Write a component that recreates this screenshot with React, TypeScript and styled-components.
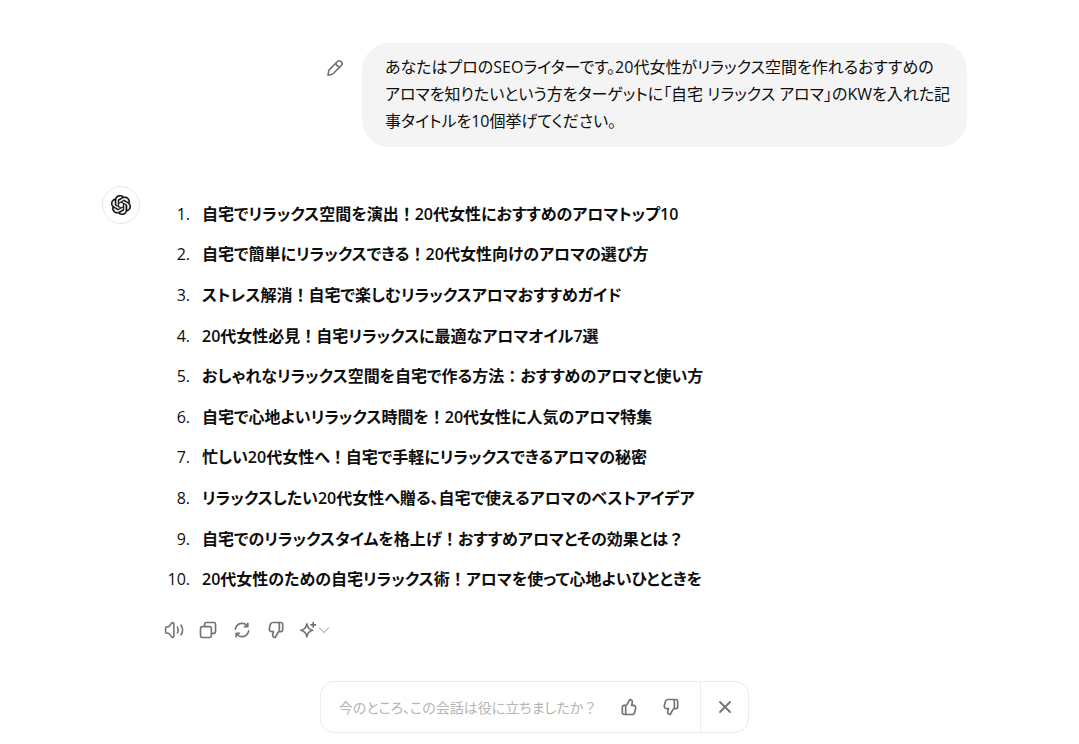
import React from "react";
import styled, { createGlobalStyle } from "styled-components";
import { SiOpenai } from "react-icons/si";

const GlobalStyle = createGlobalStyle`
  *, *::before, *::after { box-sizing: border-box; }
  body {
    margin: 0;
    background: #ffffff;
    color: #0d0d0d;
    font-family: "Open Sans", "Noto Sans CJK JP", sans-serif;
    font-feature-settings: "palt";
    font-size: 16px;
    line-height: 27px;
  }
`;

const Page = styled.main`
  padding: 43px 10px 11px 0;
`;

const Thread = styled.div`
  max-width: 865px;
  margin: 0 auto;
`;

const UserTurn = styled.section`
  display: flex;
  justify-content: flex-end;
  align-items: flex-start;
  gap: 17px;
`;

const Bubble = styled.p`
  margin: 0;
  max-width: 605px;
  flex: 1;
  padding: 11px 16px 12px 23px;
  border-radius: 27px;
  background: #f4f4f4;
`;

const IconButton = styled.button`
  display: inline-flex;
  align-items: center;
  justify-content: center;
  height: 20px;
  min-width: 20px;
  padding: 0;
  border: 0;
  background: transparent;
  color: #737373;
  cursor: pointer;
`;

const EditButton = styled(IconButton)`
  margin-top: 15px;
`;

const AssistantTurn = styled.section`
  display: flex;
  gap: 24px;
  margin-top: 39px;
`;

const Avatar = styled.div`
  display: flex;
  align-items: center;
  justify-content: center;
  flex: none;
  width: 38px;
  height: 38px;
  border: 1px solid #e8e8e8;
  border-radius: 50%;

  svg {
    stroke: currentColor;
    stroke-width: 0.4;
  }
`;

const Reply = styled.div`
  flex: 1;
  padding-top: 8px;
`;

const TitleList = styled.ol`
  display: grid;
  grid-auto-rows: 1fr;
  align-items: center;
  min-height: 406px;
  margin: 0;
  padding: 0 0 0 38px;
  list-style: none;
  counter-reset: title;
`;

const TitleItem = styled.li`
  position: relative;
  counter-increment: title;
  font-weight: 600;

  &::before {
    content: counter(title) ".";
    position: absolute;
    right: 100%;
    margin-right: 12px;
    font-weight: 400;
  }
`;

const FullWidth = styled.span`
  font-feature-settings: normal;
`;

const Actions = styled.div`
  display: flex;
  gap: 14px;
  margin-top: 20px;
`;

const Feedback = styled.aside`
  display: flex;
  width: fit-content;
  margin: 41px auto 0;
  height: 52px;
  border: 1px solid #ececec;
  border-radius: 14px;
`;

const FeedbackBody = styled.div`
  display: flex;
  align-items: center;
  gap: 22px;
  padding: 0 19px 0 18px;
`;

const Question = styled.span`
  font-size: 14px;
  color: #b4b4b4;
  white-space: nowrap;
`;

const DismissArea = styled.div`
  display: flex;
  align-items: center;
  justify-content: center;
  width: 48px;
  border-left: 1px solid #ececec;
`;

type IconProps = { children: React.ReactNode; width?: number; stroke?: number };

const SolidIcon = ({ children }: IconProps) => (
  <svg width="20" height="20" viewBox="0 0 24 24" fill="currentColor" fillRule="evenodd" aria-hidden="true">
    {children}
  </svg>
);

const LineIcon = ({ width = 20, stroke = 1.6, children }: IconProps) => (
  <svg
    width={width}
    height="20"
    viewBox={`0 0 ${width} 20`}
    fill="none"
    stroke="currentColor"
    strokeWidth={stroke}
    strokeLinecap="round"
    strokeLinejoin="round"
    aria-hidden="true"
  >
    {children}
  </svg>
);

const PencilIcon = () => (
  <LineIcon>
    <path d="M3 17.2l.7-4.3c.1-.5.3-.9.7-1.3l7.9-7.9a2.7 2.7 0 0 1 3.9 3.9l-7.9 7.9c-.4.4-.8.6-1.3.7z" />
    <path d="M10.8 5.2c.5 2 1.8 3.3 3.9 3.9" />
  </LineIcon>
);

const SpeakerIcon = () => (
  <LineIcon>
    <path d="M1.6 8.2c0-.8.6-1.4 1.4-1.4h1.2c.4 0 .7-.2.9-.5l2.6-3.2c.8-.9 2.2-.4 2.2.8v12.2c0 1.2-1.4 1.7-2.2.8l-2.6-3.2c-.2-.3-.5-.5-.9-.5H3c-.8 0-1.4-.6-1.4-1.4z" />
    <path d="M13.4 7c1 1.9 1 4.1 0 6M17 5.2c2 3 2 6.6 0 9.6" />
  </LineIcon>
);

const CopyIcon = () => (
  <SolidIcon>
    <path d="M7 5C7 3.343 8.343 2 10 2H19C20.657 2 22 3.343 22 5V14C22 15.657 20.657 17 19 17H17V19C17 20.657 15.657 22 14 22H5C3.343 22 2 20.657 2 19V10C2 8.343 3.343 7 5 7H7V5ZM9 7H14C15.657 7 17 8.343 17 10V15H19C19.552 15 20 14.552 20 14V5C20 4.448 19.552 4 19 4H10C9.448 4 9 4.448 9 5V7ZM5 9C4.448 9 4 9.448 4 10V19C4 19.552 4.448 20 5 20H14C14.552 20 15 19.552 15 19V10C15 9.448 14.552 9 14 9H5Z" />
  </SolidIcon>
);

const refreshArm =
  "M3.07 10.876C3.623 6.436 7.41 3 12 3C14.282 3 16.403 3.851 18.012 5.254V4C18.012 3.448 18.46 3 19.012 3C19.564 3 20.012 3.448 20.012 4V8C20.012 8.552 19.564 9 19.012 9H15C14.448 9 14 8.552 14 8C14 7.448 14.448 7 15 7H16.957C15.676 5.764 13.91 5 12 5C8.431 5 5.485 7.672 5.054 11.124C4.986 11.672 4.486 12.061 3.938 11.992C3.39 11.924 3.001 11.424 3.07 10.876Z";

const RefreshIcon = () => (
  <SolidIcon>
    <path d={refreshArm} />
    <path d={refreshArm} transform="rotate(180 12 12)" />
  </SolidIcon>
);

const ThumbDownIcon = () => (
  <SolidIcon>
    <path d="M11.873 21.496C11.673 21.847 11.281 22.042 10.881 21.992L10.427 21.936C7.96 21.627 6.369 19.167 7.1 16.79L7.651 15H6.932C4.295 15 2.379 12.492 3.073 9.948L4.437 4.948C4.911 3.207 6.492 2 8.296 2H18.005C19.661 2 21.005 3.343 21.005 5V12C21.005 13.657 19.661 15 18.005 15H16.005C15.745 15 15.505 15.139 15.377 15.364L11.873 21.496ZM14.005 4H8.296C7.394 4 6.604 4.604 6.366 5.474L5.003 10.474C4.656 11.746 5.614 13 6.932 13H9.005C9.322 13 9.62 13.151 9.809 13.406C9.997 13.661 10.054 13.991 9.96 14.294L9.011 17.378C8.666 18.5 9.356 19.66 10.473 19.915L13.64 14.372C13.952 13.826 14.438 13.414 15.005 13.19V5C15.005 4.448 14.557 4 14.005 4ZM17.005 13V5C17.005 4.649 16.944 4.313 16.834 4H18.005C18.557 4 19.005 4.448 19.005 5V12C19.005 12.552 18.557 13 18.005 13H17.005Z" />
  </SolidIcon>
);

const ThumbUpIcon = () => (
  <SolidIcon>
    <path d="M12.132 2.504C12.332 2.153 12.724 1.958 13.124 2.008L13.578 2.064C16.045 2.373 17.636 4.834 16.905 7.21L16.354 9H17.072C19.71 9 21.625 11.508 20.931 14.053L19.568 19.053C19.093 20.793 17.512 22 15.709 22H6C4.343 22 3 20.657 3 19V12C3 10.343 4.343 9 6 9H8C8.26 9 8.499 8.861 8.628 8.636L12.132 2.504ZM10 20H15.709C16.611 20 17.401 19.396 17.638 18.526L19.002 13.526C19.349 12.254 18.391 11 17.072 11H15C14.683 11 14.384 10.849 14.196 10.594C14.007 10.339 13.951 10.009 14.044 9.706L14.993 6.622C15.338 5.5 14.648 4.34 13.532 4.085L10.364 9.628C10.052 10.174 9.567 10.586 9 10.81V19C9 19.552 9.448 20 10 20ZM7 11V19C7 19.351 7.06 19.687 7.171 20H6C5.448 20 5 19.552 5 19V12C5 11.448 5.448 11 6 11H7Z" />
  </SolidIcon>
);

const SparkleIcon = () => (
  <LineIcon width={18}>
    <path d="M6.8 3.8c.7 4 2.1 5.7 5.9 6.5-3.800.8-5.200 2.500-5.900 6.500-.7-4-2.100-5.700-5.900-6.500 3.800-.8 5.200-2.500 5.900-6.500z" />
    <path d="M13.2 2.6v4.6M10.9 4.9h4.6" />
  </LineIcon>
);

const ChevronIcon = () => (
  <svg width="12" height="12" viewBox="0 0 12 12" fill="none" stroke="#c4c4c4" strokeWidth="1.4" strokeLinecap="round" strokeLinejoin="round" aria-hidden="true">
    <path d="M1.5 4L6 8.5 10.5 4" />
  </svg>
);

const CloseIcon = () => (
  <LineIcon stroke={1.8}>
    <path d="M5 5l10 10M15 5L5 15" />
  </LineIcon>
);

/* Keeps ！ ： ？ at full em width while the kana around them stay proportional. */
const JapaneseText = ({ text }: { text: string }) => (
  <>
    {text.split(/([！：？])/).map((part, i) =>
      /^[！：？]$/.test(part) ? <FullWidth key={i}>{part}</FullWidth> : part
    )}
  </>
);

const titles = [
  "自宅でリラックス空間を演出！20代女性におすすめのアロマトップ10",
  "自宅で簡単にリラックスできる！20代女性向けのアロマの選び方",
  "ストレス解消！自宅で楽しむリラックスアロマおすすめガイド",
  "20代女性必見！自宅リラックスに最適なアロマオイル7選",
  "おしゃれなリラックス空間を自宅で作る方法：おすすめのアロマと使い方",
  "自宅で心地よいリラックス時間を！20代女性に人気のアロマ特集",
  "忙しい20代女性へ！自宅で手軽にリラックスできるアロマの秘密",
  "リラックスしたい20代女性へ贈る、自宅で使えるアロマのベストアイデア",
  "自宅でのリラックスタイムを格上げ！おすすめアロマとその効果とは？",
  "20代女性のための自宅リラックス術！アロマを使って心地よいひとときを",
];

export default function App() {
  return (
    <>
      <GlobalStyle />
      <Page lang="ja">
        <Thread>
          <UserTurn>
            <EditButton type="button" aria-label="編集"><PencilIcon /></EditButton>
            <Bubble>
              あなたはプロのSEOライターです。20代女性がリラックス空間を作れるおすすめの
              <br />
              アロマを知りたいという方をターゲットに「自宅 リラックス アロマ」のKWを入れた記
              <br />
              事タイトルを10個挙げてください。
            </Bubble>
          </UserTurn>

          <AssistantTurn>
            <Avatar><SiOpenai size={20} aria-hidden="true" /></Avatar>
            <Reply>
              <TitleList>
                {titles.map((title) => (
                  <TitleItem key={title}><JapaneseText text={title} /></TitleItem>
                ))}
              </TitleList>
              <Actions>
                <IconButton type="button" aria-label="読み上げる"><SpeakerIcon /></IconButton>
                <IconButton type="button" aria-label="コピー"><CopyIcon /></IconButton>
                <IconButton type="button" aria-label="再生成"><RefreshIcon /></IconButton>
                <IconButton type="button" aria-label="良くない回答"><ThumbDownIcon /></IconButton>
                <IconButton type="button" aria-label="モデルを変更"><SparkleIcon /><ChevronIcon /></IconButton>
              </Actions>
            </Reply>
          </AssistantTurn>
        </Thread>

        <Feedback>
          <FeedbackBody>
            <Question><JapaneseText text="今のところ、この会話は役に立ちましたか？" /></Question>
            <IconButton type="button" aria-label="はい"><ThumbUpIcon /></IconButton>
            <IconButton type="button" aria-label="いいえ"><ThumbDownIcon /></IconButton>
          </FeedbackBody>
          <DismissArea>
            <IconButton type="button" aria-label="閉じる"><CloseIcon /></IconButton>
          </DismissArea>
        </Feedback>
      </Page>
    </>
  );
}
